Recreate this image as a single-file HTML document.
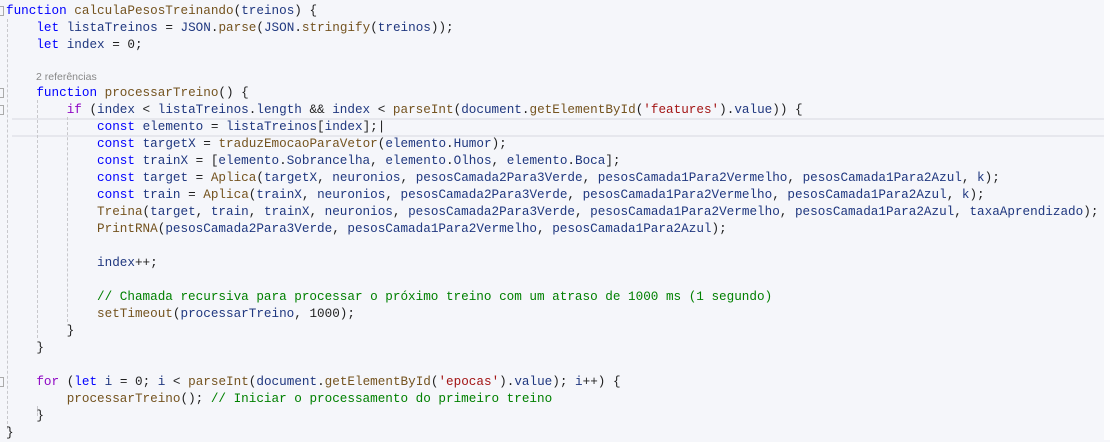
<!DOCTYPE html>
<html><head><meta charset="utf-8"><style>
body{margin:0;width:1110px;height:440px;background:#f5f6fa;overflow:hidden;position:relative;font-family:"Liberation Mono","DejaVu Sans Mono",monospace;font-size:12.65px;color:#1f1f1f}
.w{position:absolute;left:0;top:2px;width:1110px;height:440px}
.l{position:absolute;left:6px;white-space:pre;height:17px;line-height:17px}
.k{color:#0000ff}.c{color:#8f08c4}.f{color:#74531f}.v{color:#1f377f}.s{color:#a31515}.m{color:#008000}
.lens{position:absolute;left:36px;top:68px;font-family:"Liberation Sans",sans-serif;font-size:10.5px;color:#888;line-height:14px}
.hl{position:absolute;left:12px;right:6px;top:116px;height:15px;border-top:2px solid #e6e7ed;border-bottom:2px solid #e6e7ed}
.g{position:absolute;width:0;border-left:1px dashed #c8c8cc}
.fold{position:absolute;left:0;width:3px;height:8px;border:1px solid #aaa;border-left:none}
.rs{position:absolute;right:0;top:0;width:6px;height:440px;background:#fdfdfe}
</style></head><body>
<div class="rs"></div>
<div class="w">
<div class="hl"></div>
<div class="g" style="left:7px;top:17px;height:410px"></div>
<div class="g" style="left:37px;top:98px;height:238px"></div>
<div class="g" style="left:67px;top:115px;height:205px"></div>
<div class="g" style="left:37px;top:404px;height:10px"></div>
<div class="fold" style="top:4px"></div>
<div class="fold" style="top:86px"></div>
<div class="fold" style="top:103px"></div>
<div class="fold" style="top:375px"></div>
<div class="l" style="top:0"><span class="k">function</span> <span class="f">calculaPesosTreinando</span>(<span class="v">treinos</span>) {</div>
<div class="l" style="top:17px">    <span class="k">let</span> <span class="v">listaTreinos</span> = <span class="v">JSON</span>.<span class="f">parse</span>(<span class="v">JSON</span>.<span class="f">stringify</span>(<span class="v">treinos</span>));</div>
<div class="l" style="top:34px">    <span class="k">let</span> <span class="v">index</span> = 0;</div>
<div class="lens">2 referências</div>
<div class="l" style="top:82px">    <span class="k">function</span> <span class="f">processarTreino</span>() {</div>
<div class="l" style="top:99px">        <span class="c">if</span> (<span class="v">index</span> &lt; <span class="v">listaTreinos</span>.<span class="v">length</span> &amp;&amp; <span class="v">index</span> &lt; <span class="f">parseInt</span>(<span class="v">document</span>.<span class="f">getElementById</span>(<span class="s">'features'</span>).<span class="v">value</span>)) {</div>
<div class="l" style="top:116px">            <span class="k">const</span> <span class="v">elemento</span> = <span class="v">listaTreinos</span>[<span class="v">index</span>];|</div>
<div class="l" style="top:133px">            <span class="k">const</span> <span class="v">targetX</span> = <span class="f">traduzEmocaoParaVetor</span>(<span class="v">elemento</span>.<span class="v">Humor</span>);</div>
<div class="l" style="top:150px">            <span class="k">const</span> <span class="v">trainX</span> = [<span class="v">elemento</span>.<span class="v">Sobrancelha</span>, <span class="v">elemento</span>.<span class="v">Olhos</span>, <span class="v">elemento</span>.<span class="v">Boca</span>];</div>
<div class="l" style="top:167px">            <span class="k">const</span> <span class="v">target</span> = <span class="f">Aplica</span>(<span class="v">targetX</span>, <span class="v">neuronios</span>, <span class="v">pesosCamada2Para3Verde</span>, <span class="v">pesosCamada1Para2Vermelho</span>, <span class="v">pesosCamada1Para2Azul</span>, <span class="v">k</span>);</div>
<div class="l" style="top:184px">            <span class="k">const</span> <span class="v">train</span> = <span class="f">Aplica</span>(<span class="v">trainX</span>, <span class="v">neuronios</span>, <span class="v">pesosCamada2Para3Verde</span>, <span class="v">pesosCamada1Para2Vermelho</span>, <span class="v">pesosCamada1Para2Azul</span>, <span class="v">k</span>);</div>
<div class="l" style="top:201px">            <span class="f">Treina</span>(<span class="v">target</span>, <span class="v">train</span>, <span class="v">trainX</span>, <span class="v">neuronios</span>, <span class="v">pesosCamada2Para3Verde</span>, <span class="v">pesosCamada1Para2Vermelho</span>, <span class="v">pesosCamada1Para2Azul</span>, <span class="v">taxaAprendizado</span>);</div>
<div class="l" style="top:218px">            <span class="f">PrintRNA</span>(<span class="v">pesosCamada2Para3Verde</span>, <span class="v">pesosCamada1Para2Vermelho</span>, <span class="v">pesosCamada1Para2Azul</span>);</div>
<div class="l" style="top:252px">            <span class="v">index</span>++;</div>
<div class="l" style="top:286px">            <span class="m">// Chamada recursiva para processar o próximo treino com um atraso de 1000 ms (1 segundo)</span></div>
<div class="l" style="top:303px">            <span class="f">setTimeout</span>(<span class="v">processarTreino</span>, 1000);</div>
<div class="l" style="top:320px">        }</div>
<div class="l" style="top:337px">    }</div>
<div class="l" style="top:371px">    <span class="c">for</span> (<span class="k">let</span> <span class="v">i</span> = 0; <span class="v">i</span> &lt; <span class="f">parseInt</span>(<span class="v">document</span>.<span class="f">getElementById</span>(<span class="s">'epocas'</span>).<span class="v">value</span>); <span class="v">i</span>++) {</div>
<div class="l" style="top:388px">        <span class="f">processarTreino</span>(); <span class="m">// Iniciar o processamento do primeiro treino</span></div>
<div class="l" style="top:405px">    }</div>
<div class="l" style="top:422px">}</div>
</div>
</body></html>
